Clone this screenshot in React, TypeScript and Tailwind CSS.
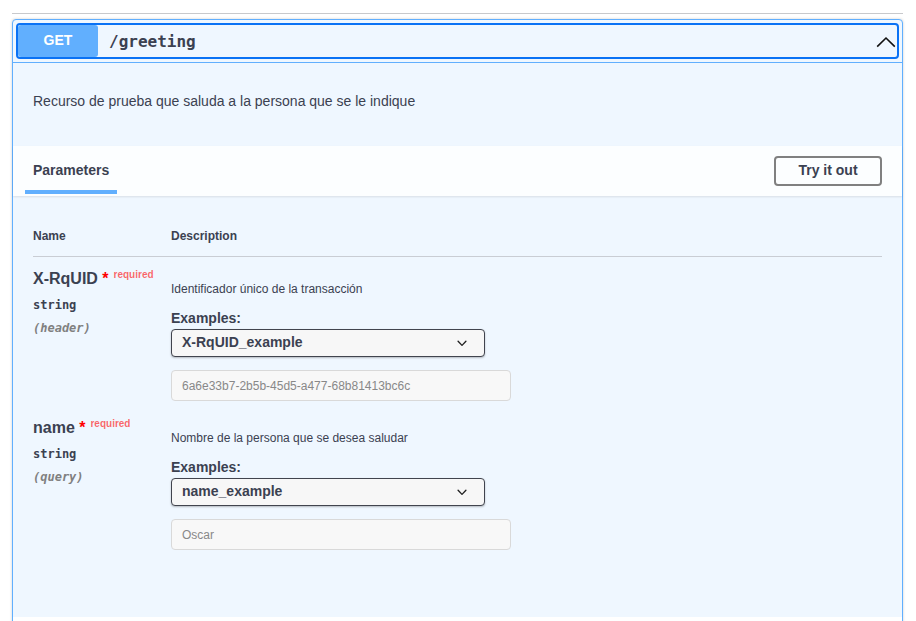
import React from "react";

function Chevron() {
  return (
    <svg width="20" height="20" viewBox="0 0 20 20" className="mr-[1px] mt-[1px] shrink-0" aria-hidden="true">
      <polyline points="1.2,14.6 10,6 18.8,14.6" fill="none" stroke="#111" strokeWidth="1.6" strokeLinejoin="miter" />
    </svg>
  );
}

function SelectArrow() {
  return (
    <svg width="20" height="20" viewBox="0 0 20 20" className="absolute right-[12px] top-1/2 -translate-y-1/2" aria-hidden="true">
      <path
        fill="#202020"
        d="M13.418 7.859a.695.695 0 01.978 0 .68.68 0 010 .969l-3.908 3.83a.697.697 0 01-.979 0l-3.908-3.83a.68.68 0 010-.969.695.695 0 01.978 0L10 11.5z"
      />
    </svg>
  );
}

type Param = {
  name: string;
  type: string;
  location: string;
  description: string;
  example: string;
  value: string;
};

const params: Param[] = [
  {
    name: "X-RqUID",
    type: "string",
    location: "(header)",
    description: "Identificador único de la transacción",
    example: "X-RqUID_example",
    value: "6a6e33b7-2b5b-45d5-a477-68b81413bc6c",
  },
  {
    name: "name",
    type: "string",
    location: "(query)",
    description: "Nombre de la persona que se desea saludar",
    example: "name_example",
    value: "Oscar",
  },
];

function ParamRow({ p }: { p: Param }) {
  return (
    <div className="flex pt-[12px] pb-[5px]">
      <div className="w-[138px] shrink-0">
        <div className="text-[16px] font-bold leading-[20px] text-[#3b4151] whitespace-nowrap">
          {p.name}
          <span className="text-[#ff0000]">&nbsp;*</span>
          <span className="relative top-[-6px] px-[5px] text-[10px] font-semibold text-[rgba(255,0,0,0.6)]">required</span>
        </div>
        <div className="mt-[7px] font-['DejaVu_Sans_Mono',monospace] text-[12px] font-bold leading-[15px] text-[#3b4151]">
          {p.type}
        </div>
        <div className="mt-[8px] font-['DejaVu_Sans_Mono',monospace] text-[12px] font-bold italic leading-[15px] text-[#808080]">
          {p.location}
        </div>
      </div>
      <div className="flex-1">
        <div className="mt-[12px] text-[12px] leading-[16px] text-[#3b4151]">{p.description}</div>
        <div className="mt-[12px] text-[14px] font-bold leading-[18px] text-[#3b4151]">Examples:</div>
        <div className="relative mt-[2px] flex h-[28px] w-[314px] items-center rounded-[4px] border border-[#41444e] bg-[#f7f7f7] pl-[10px] pb-[1px] text-[14px] font-bold text-[#3b4151] shadow-[0_1px_2px_0_rgba(0,0,0,0.25)]">
          {p.example}
          <SelectArrow />
        </div>
        <div className="mt-[13px] flex h-[31px] w-[340px] items-center rounded-[4px] border border-[#d9d9d9] bg-[#f8f8f8] pl-[10px] text-[12px] text-[#888888]">
          {p.value}
        </div>
      </div>
    </div>
  );
}

export default function App() {
  return (
    <div className="h-[621px] w-[916px] overflow-hidden bg-white pl-[12px] pr-[13px] pt-[13px] font-['Liberation_Sans',Arial,sans-serif] text-[#3b4151]">
      <div className="h-px bg-[#c8c9cc]" />
      <div className="mt-[5px] rounded-[4px] border border-[#61affe] bg-[#eff7ff] shadow-[0_0_3px_rgba(0,0,0,0.19)]">
        {/* summary */}
        <div className="border-b border-[#61affe] p-[3px]">
          <div className="flex h-[36px] items-center rounded-[4px] border-2 border-[#0a72f5]">
            <span className="flex h-[32px] w-[80px] shrink-0 items-center justify-center rounded-[3px] bg-[#61affe] pb-[1px] text-[14px] font-bold text-white">
              GET
            </span>
            <span className="pl-[11px] pt-[1px] font-['DejaVu_Sans_Mono',monospace] text-[16px] font-bold text-[#3b4151]">
              /greeting
            </span>
            <div className="flex-1" />
            <Chevron />
          </div>
        </div>

        {/* description */}
        <div className="h-[83px] px-[20px] pt-[30px] text-[14px] leading-[17px] text-[#3b4151]">
          Recurso de prueba que saluda a la persona que se le indique
        </div>

        {/* parameters header */}
        <div className="flex h-[50px] items-center justify-between bg-[rgba(255,255,255,0.8)] px-[20px] shadow-[0_1px_2px_rgba(0,0,0,0.1)]">
          <div className="relative flex h-full items-center">
            <span className="mt-[-2px] text-[14px] font-bold text-[#3b4151]">Parameters</span>
            <span className="absolute bottom-[2px] left-[-8px] h-[4px] w-[92px] bg-[#61affe]" />
          </div>
          <button className="h-[30px] w-[108px] rounded-[4px] border-2 border-[#808080] bg-transparent text-[14px] font-bold text-[#3b4151] mt-[-1px]">
            Try it out
          </button>
        </div>

        {/* table */}
        <div className="h-[421px] px-[20px] pt-[21px]">
          <div className="flex border-b border-[#c9cdd4] py-[12px] text-[12px] font-bold leading-[15px] text-[#3b4151]">
            <div className="w-[138px]">Name</div>
            <div>Description</div>
          </div>
          {params.map((p) => (
            <ParamRow key={p.name} p={p} />
          ))}
        </div>

        <div className="h-[40px] bg-white" />
      </div>
    </div>
  );
}
